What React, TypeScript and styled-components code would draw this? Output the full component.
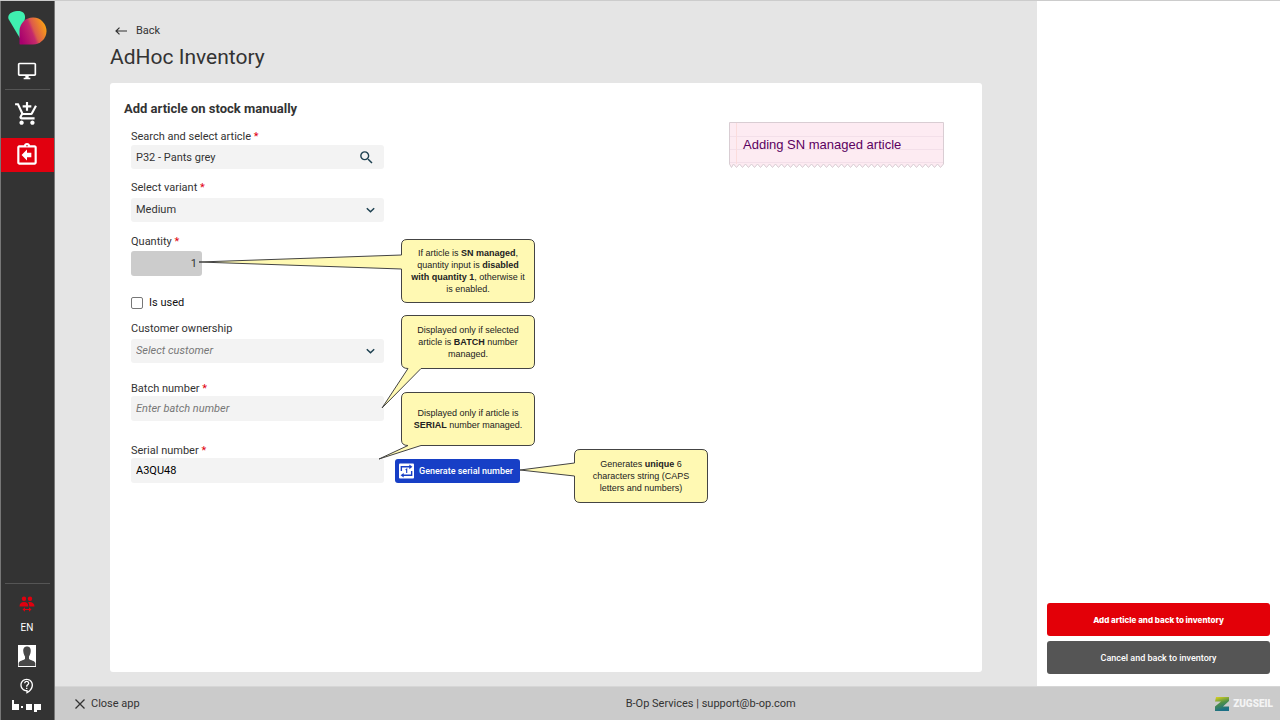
import React from "react";
import styled, { createGlobalStyle } from "styled-components";
import {
  MdAddShoppingCart,
  MdOutlineAssignmentReturn,
  MdOutlineContactSupport,
  MdOutlineDesktopWindows,
  MdSearch,
} from "react-icons/md";

const GlobalStyle = createGlobalStyle`
  *, *::before, *::after { box-sizing: border-box; }
  body {
    margin: 0;
    background: #e5e5e5;
    color: #333;
    font: 400 11px/16px Roboto, sans-serif;
  }
  button, input, select { font: inherit; color: inherit; }
  svg { display: block; flex: none; }
`;

const Shell = styled.div`
  display: flex;
  min-height: 100vh;
  border-top: 1px solid #ccc;
`;

const Sidebar = styled.nav`
  display: flex;
  flex: none;
  flex-direction: column;
  align-items: center;
  width: 55px;
  background: #333;
  border-left: 1px solid #777;
  border-right: 1px solid #777;
  color: #fff;
`;

const NavButton = styled.button<{ $height: number; $active?: boolean }>`
  display: flex;
  align-items: center;
  justify-content: center;
  width: 100%;
  height: ${(p) => p.$height}px;
  padding: 0 1px 0 0;
  border: 0;
  background: ${(p) => (p.$active ? "#e1000f" : "transparent")};
  color: #fff;
  font-size: 10px;
`;

const Divider = styled.hr`
  width: 45px;
  margin: 0;
  border: 0;
  border-top: 1px solid #555;
`;

const Spacer = styled.div`
  flex: 1;
`;

const Workspace = styled.div`
  display: flex;
  flex: 1;
  flex-direction: column;
  min-width: 0;
`;

const Body = styled.div`
  display: flex;
  flex: 1;
`;

const Main = styled.main`
  display: flex;
  flex: 1;
  flex-direction: column;
  min-width: 0;
  padding: 22px 55px 14px;
`;

const BackLink = styled.a`
  display: flex;
  align-items: center;
  align-self: flex-start;
  gap: 9px;
  padding-left: 5px;
  color: #333;
  text-decoration: none;
`;

const PageTitle = styled.h1`
  margin: 4px 0 12px;
  font-size: 21px;
  font-weight: 400;
  line-height: 28px;
`;

const Card = styled.section`
  position: relative;
  flex: 1;
  padding: 16px 14px;
  border-radius: 3px;
  background: #fff;
`;

const CardTitle = styled.h2`
  margin: 0 0 11px;
  font-size: 13px;
  font-weight: 700;
  line-height: 20px;
`;

const Form = styled.form`
  display: flex;
  flex-direction: column;
  align-items: flex-start;
  padding-left: 7px;
`;

const Field = styled.div<{ $gap: number; $after: number }>`
  display: flex;
  flex-direction: column;
  align-items: flex-start;
  gap: ${(p) => p.$gap}px;
  margin-bottom: ${(p) => p.$after}px;
`;

const Label = styled.label`
  line-height: 14px;
`;

const Required = styled.span`
  color: #e1000f;
`;

const ControlBox = styled.div<{ $tall?: boolean }>`
  display: flex;
  align-items: center;
  width: 253px;
  height: ${(p) => (p.$tall ? 25 : 24)}px;
  padding-right: 9px;
  border-radius: 3px;
  background: #f3f3f3;
`;

const TextInput = styled.input`
  flex: 1;
  min-width: 0;
  height: 24px;
  padding: 0 5px;
  border: 0;
  background: transparent;
  &::placeholder { color: #777; font-style: italic; opacity: 1; }
`;

const SerialInput = styled(TextInput)`
  color: #000;
`;

const Select = styled.select<{ $placeholder?: boolean }>`
  flex: 1;
  height: 24px;
  padding: 0 5px;
  border: 0;
  appearance: none;
  background: transparent;
  color: ${(p) => (p.$placeholder ? "#777" : "#333")};
  font-style: ${(p) => (p.$placeholder ? "italic" : "normal")};
`;

const QuantityInput = styled.input`
  width: 71px;
  height: 25px;
  padding: 0 5px;
  border: 0;
  border-radius: 3px;
  background: #ccc;
  text-align: right;
`;

const CheckRow = styled.label`
  display: flex;
  align-items: center;
  gap: 6px;
  margin-bottom: 11px;
  color: #111;
`;

const Checkbox = styled.input`
  appearance: none;
  width: 12px;
  height: 12px;
  margin: 0;
  border: 1px solid #777;
  border-radius: 2px;
  background: #fff;
`;

const SerialRow = styled.div`
  display: flex;
  align-items: flex-end;
  gap: 11px;
`;

const GenerateButton = styled.button`
  display: flex;
  align-items: center;
  gap: 5px;
  height: 24px;
  padding: 0 7px 0 4px;
  border: 0;
  border-radius: 3px;
  background: #173fc6;
  color: #fff;
  font-size: 9px;
  font-weight: 500;
`;

const Note = styled.aside<{ $left: number; $top: number; $height: number }>`
  position: absolute;
  left: ${(p) => p.$left}px;
  top: ${(p) => p.$top}px;
  display: flex;
  align-items: center;
  justify-content: center;
  width: 134px;
  height: ${(p) => p.$height}px;
  color: #222;
  font: 400 9px/12px "Liberation Sans", sans-serif;
  text-align: center;
  white-space: nowrap;
`;

const NoteShape = styled.svg`
  position: absolute;
  inset: 0;
  overflow: visible;
  pointer-events: none;
`;

const NoteText = styled.p`
  position: relative;
  margin: 0;
`;

const Ticket = styled.aside`
  position: absolute;
  top: 39px;
  right: 38px;
  display: flex;
  align-items: center;
  width: 215px;
  height: 46px;
  padding: 0 14px;
  color: #5b0060;
  font: 400 13px/16px "Liberation Sans", sans-serif;
`;

const ActionPanel = styled.aside`
  display: flex;
  flex: none;
  flex-direction: column;
  justify-content: flex-end;
  gap: 5px;
  width: 243px;
  padding: 10px 10px 12px;
  background: #fff;
`;

const ActionButton = styled.button<{ $primary?: boolean }>`
  height: 33px;
  border: 0;
  border-radius: 3px;
  background: ${(p) => (p.$primary ? "#e30008" : "#555")};
  color: #fff;
  font: ${(p) => (p.$primary ? "800 8px/16px Inter" : "500 9px/16px Roboto")}, sans-serif;
`;

const Footer = styled.footer`
  display: grid;
  grid-template-columns: 15fr auto 13fr;
  align-items: center;
  height: 34px;
  padding: 0 7px 0 20px;
  border-top: 1px solid #d6d6d6;
  background: #cbcbcb;
`;

const CloseButton = styled.button`
  display: flex;
  align-items: center;
  justify-self: start;
  gap: 6px;
  padding: 0;
  border: 0;
  background: none;
`;

const Brand = styled.div`
  display: flex;
  align-items: center;
  justify-self: end;
  gap: 4px;
  color: #f4f4f4;
  font: 900 10px/16px Roboto, sans-serif;
`;

const PetalLogo = () => (
  <svg width="40" height="38" viewBox="0 -2 40 38" aria-hidden="true">
    <defs>
      <linearGradient id="petal" x1="0" y1="0.7" x2="1" y2="0.3">
        <stop offset="0" stopColor="#a8006e" />
        <stop offset="0.45" stopColor="#c52a6b" />
        <stop offset="0.55" stopColor="#dc5a4c" />
        <stop offset="1" stopColor="#fba50f" />
      </linearGradient>
    </defs>
    <path d="M1.500 9C0 4 5 1.500 10 1C15 .5 18.500 3 18 8L14 30Z" fill="#3ff0b0" />
    <path d="M12.500 34V20.500A13.500 13.500 0 1 1 26 34.500H13Z" fill="url(#petal)" />
  </svg>
);

const PeopleIcon = () => (
  <svg width="16" height="16" viewBox="0 0 16 16" fill="#e1000f" aria-hidden="true">
    <circle cx="5" cy="2.700" r="2.200" />
    <circle cx="11" cy="2.700" r="2.200" />
    <path d="M.5 10.500C.5 7.500 2 5.900 5 5.900S9.300 7.500 9.300 10.500ZM10.300 10.500C10.300 8.500 9.800 7 9 6.200C12.500 5.400 15.500 7 15.500 10.500Z" />
    <path d="M3.500 13.500L6 11.300V13H10V11.300L12.500 13.500L10 15.700V14H6V15.700Z" />
  </svg>
);

const AvatarIcon = () => (
  <svg width="18" height="22" viewBox="0 0 18 22" aria-hidden="true">
    <path d="M0 0H18V22H0Z" fill="#fff" />
    <path d="M9 1.500C12 1.500 13 3.800 12.700 6.500C12.500 9 11.500 10.500 11 11.500V14C13 15.500 16.500 15.500 17.300 18V21H.7V18C1.500 15.500 5 15.500 7 14V11.500C6.500 10.500 5.500 9 5.300 6.500C5 3.800 6 1.500 9 1.500Z" fill="#484848" />
  </svg>
);

const BopLogo = () => (
  <svg width="30" height="14" viewBox="0 0 30 14" fill="#fff" role="img" aria-label="b-op">
    <rect y="1" width="2" height="10" />
    <rect y="5" width="7" height="6" />
    <rect x="9" y="7" width="2" height="2" />
    <rect x="14" y="5" width="6" height="6" />
    <rect x="22" y="5" width="7" height="6" />
    <rect x="22" y="5" width="3" height="8" />
  </svg>
);

const ArrowLeft = () => (
  <svg width="12" height="8" viewBox="0 0 12 8" fill="none" stroke="#333" strokeWidth="1.200" aria-hidden="true">
    <path d="M12 4H1M4.500 .6L1 4L4.500 7.400" />
  </svg>
);

const Chevron = () => (
  <svg width="9" height="6" viewBox="0 0 9 6" fill="none" stroke="#1d4050" strokeWidth="1.500" aria-hidden="true">
    <path d="M.8 1.200L4.500 4.800L8.200 1.200" />
  </svg>
);

const CloseIcon = () => (
  <svg width="10" height="10" viewBox="0 0 10 10" stroke="#333" strokeWidth="1.300" aria-hidden="true">
    <path d="M.5 .5L9.500 9.500M9.500 .5L.5 9.500" />
  </svg>
);

const LoopIcon = () => (
  <svg width="15" height="16" viewBox="0 0 16 16" aria-hidden="true">
    <rect width="16" height="16" rx="1" fill="#fff" />
    <g fill="none" stroke="#173fc6" strokeWidth="1.500">
      <path d="M2.500 8V3.500H12M13.500 8V12.500H4" />
      <path d="M7 6.800L8.200 6V10" strokeWidth="1.200" />
    </g>
    <path d="M11 1L14.300 3.500L11 6ZM5 10L1.700 12.500L5 15Z" fill="#173fc6" />
  </svg>
);

const ZugseilMark = () => (
  <svg width="14" height="14" viewBox="0 0 14 14" aria-hidden="true">
    <defs>
      <linearGradient id="zug" x1="0" y1="0" x2="0.3" y2="1">
        <stop offset="0" stopColor="#e5d51c" />
        <stop offset="0.5" stopColor="#4f9048" />
        <stop offset="1" stopColor="#1a6f86" />
      </linearGradient>
    </defs>
    <path d="M1 0H14V4L8 9.500H14V14H0V9.500L6 4.500H0Z" fill="url(#zug)" />
  </svg>
);

type CalloutProps = {
  left: number;
  top: number;
  height: number;
  outline: string;
  children: React.ReactNode;
};

const Callout = ({ left, top, height, outline, children }: CalloutProps) => (
  <Note $left={left} $top={top} $height={height}>
    <NoteShape width="134" height={height} aria-hidden="true">
      <path d={outline} fill="#fff9b3" stroke="#444" strokeLinejoin="round" />
    </NoteShape>
    <NoteText>{children}</NoteText>
  </Note>
);

/* Rounded box with a pointer leaving its left edge. */
const sideTail = (h: number, tipX: number, tipY: number, y1: number, y2: number) =>
  `M6 .5H128Q133.500 .5 133.500 6V${h - 6}Q133.500 ${h - 0.5} 128 ${h - 0.5}H6Q.5 ${h - 0.5} .5 ${h - 6}V${y2}L${tipX} ${tipY}L.5 ${y1}V6Q.5 .5 6 .5Z`;

/* Rounded box with a pointer leaving its bottom edge. */
const bottomTail = (h: number, tipX: number, tipY: number) =>
  `M6 .5H128Q133.500 .5 133.500 6V${h - 6}Q133.500 ${h - 0.5} 128 ${h - 0.5}H20L${tipX} ${tipY}L7 ${h - 0.5}Q.5 ${h - 0.5} .5 ${h - 6}V6Q.5 .5 6 .5Z`;

/* Torn lower edge of the ticket, drawn from right to left. */
const tornEdge = Array.from({ length: 35 }, (_, i) => `L${211.5 - i * 6} 45.500L${208.5 - i * 6} 42`).join("");

const Star = () => <Required aria-hidden="true">*</Required>;

export default function App() {
  return (
    <>
      <GlobalStyle />
      <Shell>
        <Sidebar aria-label="Main">
          <NavButton $height={52} aria-label="Home"><PetalLogo /></NavButton>
          <NavButton $height={36} aria-label="Desktop"><MdOutlineDesktopWindows size={20} /></NavButton>
          <Divider />
          <NavButton $height={48} aria-label="Cart"><MdAddShoppingCart size={26} /></NavButton>
          <NavButton $height={34} $active aria-label="Inventory"><MdOutlineAssignmentReturn size={26} /></NavButton>
          <Spacer />
          <Divider />
          <NavButton $height={40} aria-label="Switch user"><PeopleIcon /></NavButton>
          <NavButton $height={8}>EN</NavButton>
          <NavButton $height={48} aria-label="Profile"><AvatarIcon /></NavButton>
          <NavButton $height={12} aria-label="Help"><MdOutlineContactSupport size={16} /></NavButton>
          <NavButton $height={28} aria-label="b-op"><BopLogo /></NavButton>
        </Sidebar>
        <Workspace>
          <Body>
            <Main>
              <BackLink href="#back"><ArrowLeft />Back</BackLink>
              <PageTitle>AdHoc Inventory</PageTitle>
              <Card>
                <CardTitle>Add article on stock manually</CardTitle>
                <Form onSubmit={(e) => e.preventDefault()}>
                  <Field $gap={1} $after={12}>
                    <Label htmlFor="article">Search and select article <Star /></Label>
                    <ControlBox>
                      <TextInput id="article" defaultValue="P32 - Pants grey" />
                      <MdSearch size={17} color="#1d4050" />
                    </ControlBox>
                  </Field>
                  <Field $gap={3} $after={13}>
                    <Label htmlFor="variant">Select variant <Star /></Label>
                    <ControlBox>
                      <Select id="variant"><option>Medium</option></Select>
                      <Chevron />
                    </ControlBox>
                  </Field>
                  <Field $gap={2} $after={19}>
                    <Label htmlFor="quantity">Quantity <Star /></Label>
                    <QuantityInput id="quantity" defaultValue="1" disabled />
                  </Field>
                  <CheckRow><Checkbox type="checkbox" />Is used</CheckRow>
                  <Field $gap={3} $after={19}>
                    <Label htmlFor="customer">Customer ownership</Label>
                    <ControlBox>
                      <Select id="customer" $placeholder><option>Select customer</option></Select>
                      <Chevron />
                    </ControlBox>
                  </Field>
                  <Field $gap={0} $after={23}>
                    <Label htmlFor="batch">Batch number <Star /></Label>
                    <ControlBox $tall><TextInput id="batch" placeholder="Enter batch number" /></ControlBox>
                  </Field>
                  <Field $gap={0} $after={0}>
                    <Label htmlFor="serial">Serial number <Star /></Label>
                    <SerialRow>
                      <ControlBox $tall><SerialInput id="serial" defaultValue="A3QU48" /></ControlBox>
                      <GenerateButton type="button"><LoopIcon />Generate serial number</GenerateButton>
                    </SerialRow>
                  </Field>
                </Form>

                <Callout left={291} top={156} height={64} outline={sideTail(64, -202, 23, 16, 30)}>
                  If article is <b>SN managed</b>,<br />quantity input is <b>disabled</b><br />
                  <b>with quantity 1</b>, otherwise it<br />is enabled.
                </Callout>
                <Callout left={291} top={232} height={54} outline={bottomTail(54, -19, 93)}>
                  Displayed only if selected<br />article is <b>BATCH</b> number<br />managed.
                </Callout>
                <Callout left={291} top={309} height={54} outline={bottomTail(54, -22, 67)}>
                  Displayed only if article is<br /><b>SERIAL</b> number managed.
                </Callout>
                <Callout left={464} top={366} height={54} outline={sideTail(54, -54, 21, 14, 27)}>
                  Generates <b>unique</b> 6<br />characters string (CAPS<br />letters and numbers)
                </Callout>

                <Ticket>
                  <NoteShape width="215" height="46" aria-hidden="true">
                    <path d={`M.5 .5H214.500V42${tornEdge}L2.500 45.500L.5 42Z`} fill="#fdebf2" stroke="#d9cdd3" />
                    <path d="M1 14.500H214M1 27.500H214M1 40.500H214" stroke="#f3dfe9" />
                    <path d="M7.500 1V42" stroke="#fbdcdc" />
                  </NoteShape>
                  <NoteText>Adding SN managed article</NoteText>
                </Ticket>
              </Card>
            </Main>
            <ActionPanel>
              <ActionButton $primary type="button">Add article and back to inventory</ActionButton>
              <ActionButton type="button">Cancel and back to inventory</ActionButton>
            </ActionPanel>
          </Body>
          <Footer>
            <CloseButton type="button"><CloseIcon />Close app</CloseButton>
            <span>B-Op Services | support@b-op.com</span>
            <Brand><ZugseilMark />ZUGSEIL</Brand>
          </Footer>
        </Workspace>
      </Shell>
    </>
  );
}
